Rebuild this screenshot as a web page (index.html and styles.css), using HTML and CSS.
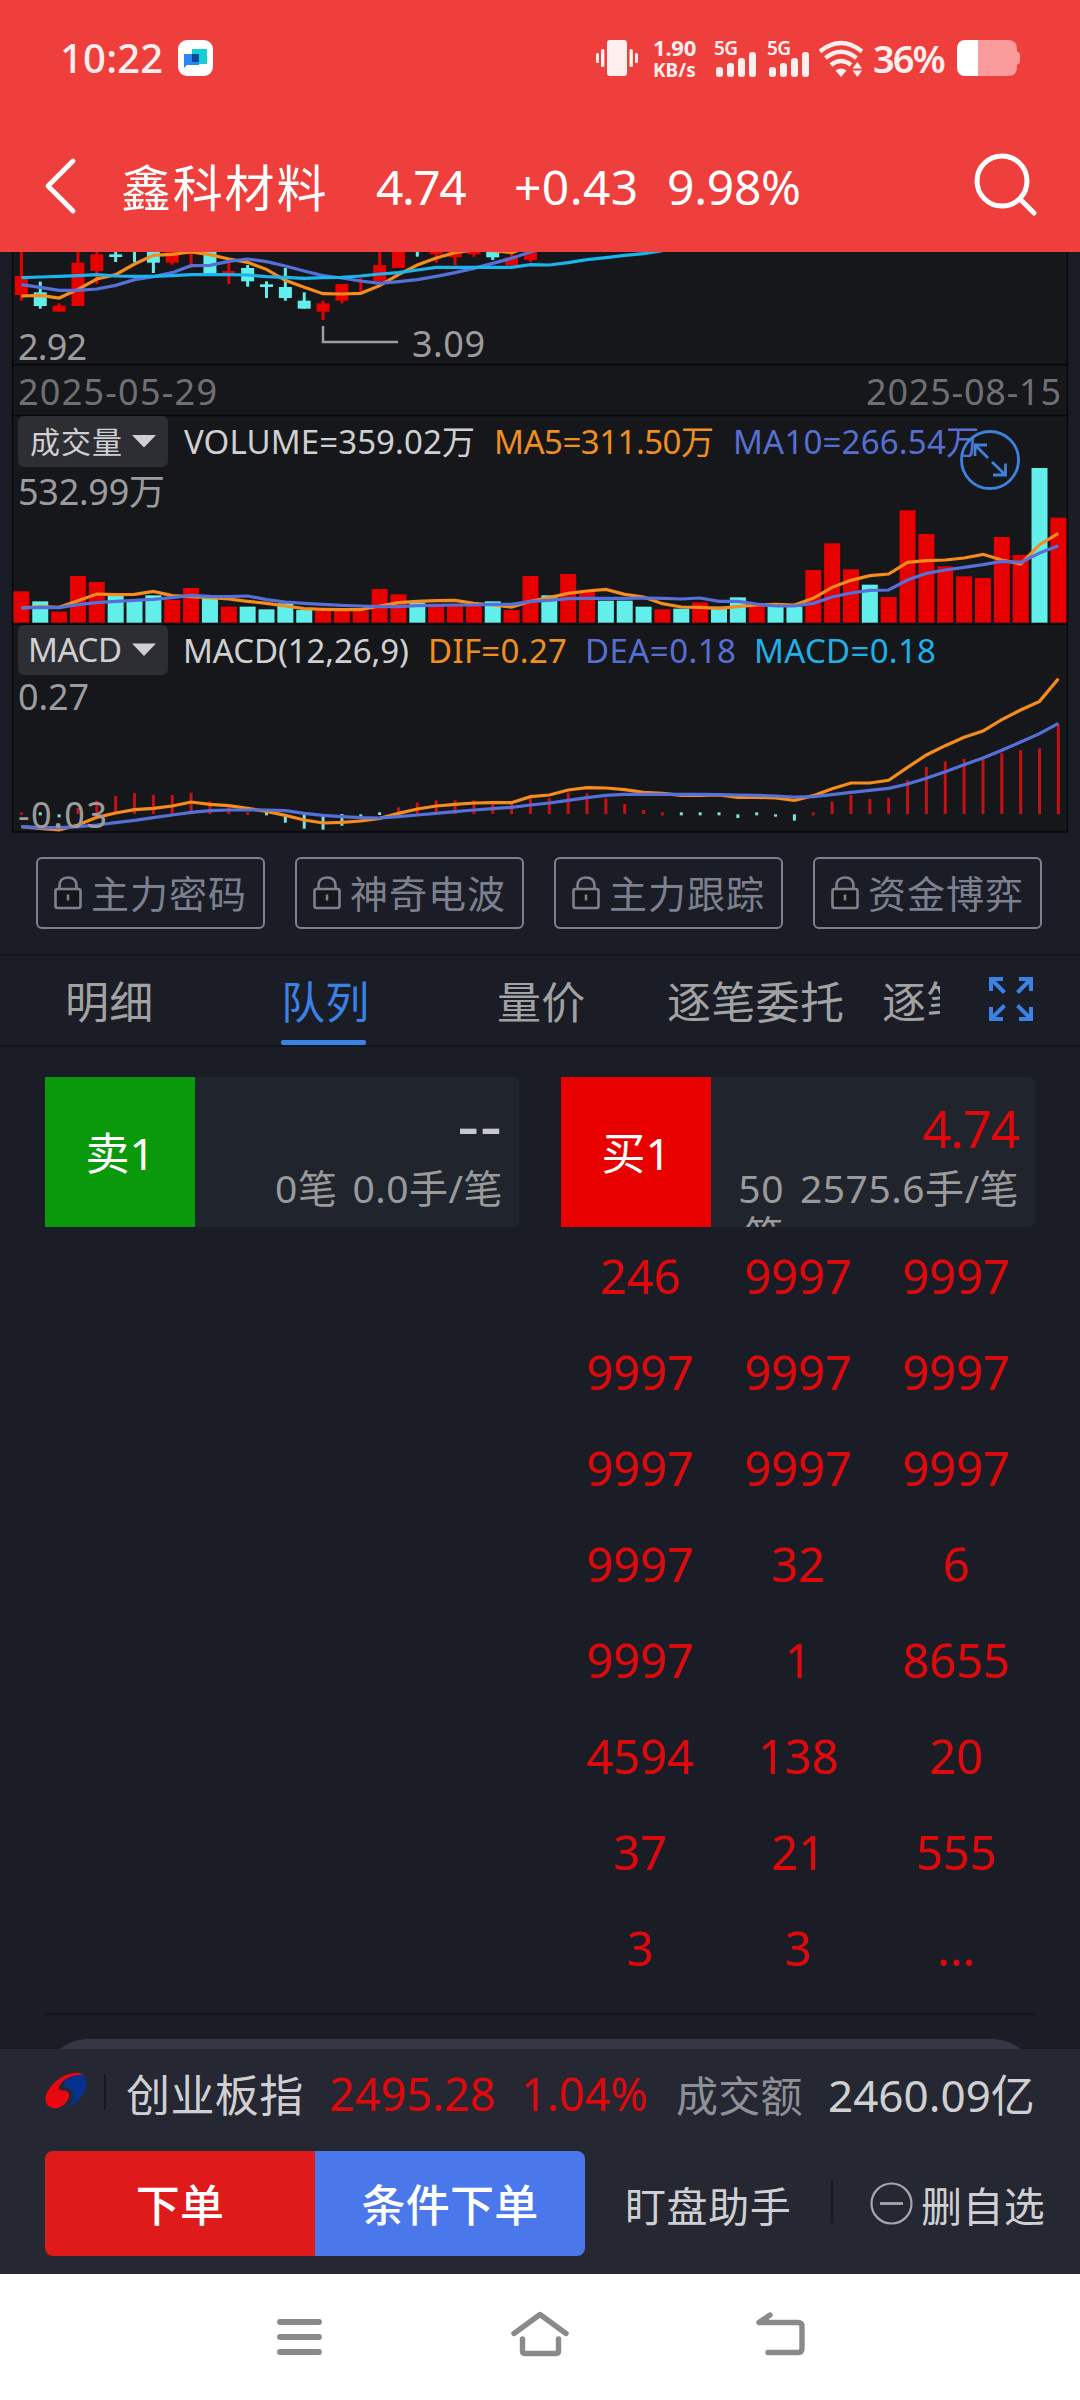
FILE: index.html
```html
<!DOCTYPE html>
<html lang="zh-CN">
<head>
<meta charset="utf-8">
<title>鑫科材料</title>
<link rel="stylesheet" href="styles.css">
</head>
<body>
<div class="screen">
  <header class="top">
    <div class="status">
      <span class="clock">10:22</span>
      <svg class="app-icon" width="36" height="36" viewBox="0 0 36 36"><rect width="35" height="36" rx="9" fill="#fff"/><path d="M14 9h15v15h-15z" fill="#13cfd3"/><path d="M6 14h15v11h-12l-3 3z" fill="#2b86f5"/><path d="M14 14h7v8h-7z" fill="#07489c"/></svg>
      <svg class="sys-icon vib" width="43" height="38" viewBox="0 0 43 38" fill="#ffefee"><rect x="11" y="1" width="20" height="36" rx="3"/><rect x="5" y="10" width="3.4" height="18" rx="1.5"/><rect x="0" y="14" width="3" height="10" rx="1.5"/><rect x="33.5" y="10" width="3.4" height="18" rx="1.5"/><rect x="39" y="14" width="3" height="10" rx="1.5"/></svg>
      <div class="speed"><span class="rate">1.90</span><span class="unit">KB/s</span></div>
      <div class="cell"><span class="gen">5G</span><svg width="42" height="38" viewBox="0 0 42 38" fill="#ffefee"><rect x="2" y="28" width="7" height="10" rx="3"/><rect x="13" y="24" width="7" height="14" rx="3"/><rect x="24" y="19" width="7" height="19" rx="3"/><rect x="35" y="13" width="7" height="25" rx="3"/></svg></div>
      <div class="cell"><span class="gen">5G</span><svg width="42" height="38" viewBox="0 0 42 38" fill="#ffefee"><rect x="2" y="28" width="7" height="10" rx="3"/><rect x="13" y="24" width="7" height="14" rx="3"/><rect x="24" y="19" width="7" height="19" rx="3"/><rect x="35" y="13" width="7" height="25" rx="3"/></svg></div>
      <svg class="sys-icon wifi" width="46" height="38" viewBox="0 0 46 38" fill="none" stroke="#ffefee" stroke-width="4.4"><path d="M1 12.5Q22 -4.500 43 12.500"/><path d="M6.500 19Q22 6.500 37.500 19"/><path d="M12 26Q22 18 32 26"/><path d="M16.500 31.500Q22 27.500 27.500 31.500L22 38z" fill="#ffefee" stroke="none"/><path d="M33.500 29.500l4.800-6.500 4.800 6.500zM33.500 31.500l4.800 6.500 4.800-6.500z" fill="#ffefee" stroke="none"/></svg>
      <span class="pct">36%</span>
      <svg class="battery" width="64" height="36" viewBox="0 0 64 36"><path d="M9 0H51Q60 0 60 9V11.500Q63 12 63 15V21Q63 24 60 24.500V27Q60 36 51 36H9Q0 36 0 27V9Q0 0 9 0z" fill="#f99c9b"/><path d="M9 0H21V36H9Q0 36 0 27V9Q0 0 9 0z" fill="#fff"/></svg>
    </div>
    <div class="title">
      <svg class="back" width="34" height="58" viewBox="0 0 34 58" fill="none" stroke="#fff" stroke-width="4.800" stroke-linecap="round" stroke-linejoin="round"><path d="M30 4L5 29 30 54"/></svg>
      <span class="name">鑫科材料</span>
      <span class="t-price">4.74</span>
      <span class="t-diff">+0.43</span>
      <span class="t-pct">9.98%</span>
      <svg class="search" width="64" height="64" viewBox="0 0 64 64" fill="none" stroke="#fff" stroke-width="5" stroke-linecap="round"><circle cx="28" cy="28" r="25"/><path d="M46 46L60 60"/></svg>
    </div>
  </header>

  <svg class="chart" id="chart" width="1080" height="588" viewBox="0 252 1080 588">
    <rect x="12.500" y="240" width="1055" height="592" fill="#16171b" stroke="#08090c" stroke-width="1.500"/>
    <path d="M12 364.600H1067M12 415.500H1067M12 624.300H1067" stroke="#060709" stroke-width="1.500"/>
    <g id="candles"></g>
    <path d="M323 326V342H398" fill="none" stroke="#9c9c9e" stroke-width="2.500"/>
    <g id="volume"></g>
    <g id="macd"></g>
    <g class="axis">
      <text x="18" y="360" textLength="69">2.92</text>
      <text x="412" y="357" textLength="73">3.09</text>
      <text class="dim" x="18" y="405" textLength="199">2025-05-29</text>
      <text class="dim" x="866" y="405" textLength="195">2025-08-15</text>
      <text x="18" y="505" textLength="147">532.99万</text>
      <text x="18" y="710" textLength="71">0.27</text>
      <text x="18" y="828" textLength="89">-0.03</text>
    </g>
    <g class="chips">
      <rect x="18" y="416" width="150" height="51" rx="6"/>
      <rect x="18" y="625" width="150" height="50" rx="6"/>
      <path d="M132 435h24l-12 12.500zM132 643.500h24l-12 12.500z" fill="#d0d0d2"/>
    </g>
    <g class="legend">
      <text x="30" y="453" textLength="92">成交量</text>
      <text x="184" y="454" textLength="291">VOLUME=359.02万</text>
      <text class="o" x="494" y="454" textLength="220">MA5=311.50万</text>
      <text class="b" x="733" y="454" textLength="246">MA10=266.54万</text>
      <text x="28" y="662" textLength="94">MACD</text>
      <text x="183" y="663" textLength="226">MACD(12,26,9)</text>
      <text class="o" x="428" y="663" textLength="139">DIF=0.27</text>
      <text class="b" x="585" y="663" textLength="151">DEA=0.18</text>
      <text class="c" x="754" y="663" textLength="182">MACD=0.18</text>
    </g>
    <g fill="none" stroke="#3f82dd" stroke-width="2.800"><circle cx="990" cy="460" r="28.500"/><path d="M988 458L975 445M975 456V445H987M992 462L1005.500 475M1005.500 463.500V475H993"/></g>
  </svg>

  <div class="locks">
    <div class="lock"><svg width="28" height="34" viewBox="0 0 28 34" fill="none" stroke="#7d808e" stroke-width="2.600"><path d="M5.500 13V10Q5.500 1.500 14 1.500T22.500 10V13"/><rect x="1.500" y="13" width="25" height="19" rx="2" fill="#15161a"/><path d="M14 18.500V24.500"/></svg><span>主力密码</span></div>
    <div class="lock"><svg width="28" height="34" viewBox="0 0 28 34" fill="none" stroke="#7d808e" stroke-width="2.600"><path d="M5.500 13V10Q5.500 1.500 14 1.500T22.500 10V13"/><rect x="1.500" y="13" width="25" height="19" rx="2" fill="#15161a"/><path d="M14 18.500V24.500"/></svg><span>神奇电波</span></div>
    <div class="lock"><svg width="28" height="34" viewBox="0 0 28 34" fill="none" stroke="#7d808e" stroke-width="2.600"><path d="M5.500 13V10Q5.500 1.500 14 1.500T22.500 10V13"/><rect x="1.500" y="13" width="25" height="19" rx="2" fill="#15161a"/><path d="M14 18.500V24.500"/></svg><span>主力跟踪</span></div>
    <div class="lock"><svg width="28" height="34" viewBox="0 0 28 34" fill="none" stroke="#7d808e" stroke-width="2.600"><path d="M5.500 13V10Q5.500 1.500 14 1.500T22.500 10V13"/><rect x="1.500" y="13" width="25" height="19" rx="2" fill="#15161a"/><path d="M14 18.500V24.500"/></svg><span>资金博弈</span></div>
  </div>

  <nav class="tabs">
    <div class="tab-list">
      <span class="tab">明细</span>
      <span class="tab active">队列</span>
      <span class="tab">量价</span>
      <span class="tab wide">逐笔委托</span>
      <span class="tab last">逐笔</span>
    </div>
    <svg class="expand" width="44" height="44" viewBox="0 0 44 44" fill="none" stroke="#3b82e6" stroke-width="4"><path d="M2 14V2H14M2 2L15.500 15.500M30 2H42V14M42 2L28.500 15.500M2 30V42H14M2 42L15.500 28.500M42 30V42H30M42 42L28.500 28.500"/></svg>
  </nav>

  <main class="queue">
    <section class="side">
      <div class="card">
        <div class="badge sell">卖1</div>
        <div class="info"><div class="px flat">--</div><div class="stat"><span class="cnt0">0笔</span><span>0.0手/笔</span></div></div>
      </div>
    </section>
    <section class="side">
      <div class="card">
        <div class="badge buy">买1</div>
        <div class="info"><div class="px">4.74</div><div class="stat"><span class="cnt">50笔</span><span class="avg">2575.6手/笔</span></div></div>
      </div>
      <div class="orders">
        <span>246</span><span>9997</span><span>9997</span>
        <span>9997</span><span>9997</span><span>9997</span>
        <span>9997</span><span>9997</span><span>9997</span>
        <span>9997</span><span>32</span><span>6</span>
        <span>9997</span><span>1</span><span>8655</span>
        <span>4594</span><span>138</span><span>20</span>
        <span>37</span><span>21</span><span>555</span>
        <span>3</span><span>3</span><span>...</span>
      </div>
    </section>
  </main>
  <div class="peek"><div class="sheet"></div></div>

  <footer class="dock">
    <div class="index">
      <svg class="logo" width="42" height="42" viewBox="0 0 42 42"><path d="M23 37C40 30 45 12 38 5C30 3 20 7 19 14C18 19 27 17 28 23C29 28 27 32 23 37z" fill="#06318f"/><path d="M38 5C34 0 18 3 8 14C-1 24 -2 33 5 37C13 41 23 34 24 26C25 18 15 22 14 19C13 13 24 4 38 5z" fill="#e90712"/></svg>
      <i class="bar"></i>
      <span class="i-name">创业板指</span>
      <span class="i-val">2495.28</span>
      <span class="i-pct">1.04%</span>
      <span class="i-lab">成交额</span>
      <span class="i-amt">2460.09亿</span>
    </div>
    <div class="actions">
      <div class="btn order">下单</div>
      <div class="btn cond">条件下单</div>
      <span class="helper">盯盘助手</span>
      <i class="bar tall"></i>
      <svg class="minus" width="43" height="43" viewBox="0 0 43 43" fill="none" stroke="#a7a7ab" stroke-width="2.200"><circle cx="21.500" cy="21.500" r="20"/><path d="M10 21.500H33" stroke-width="2.800"/></svg>
      <span class="remove">删自选</span>
    </div>
  </footer>

  <div class="sysnav">
    <svg width="48" height="44" viewBox="0 0 48 44" fill="none" stroke="#8a8a8a" stroke-width="5.800" stroke-linecap="round"><path d="M4 8H43M4 23H43M4 38H43"/></svg>
    <svg width="60" height="48" viewBox="0 0 60 48" fill="none" stroke="#8a8a8a" stroke-width="5.400" stroke-linecap="round" stroke-linejoin="round"><path d="M4 23.500L30 4.500 56 23.500M12.500 29V41Q12.500 43.500 15 43.500H46Q48.500 43.500 48.500 41V29"/></svg>
    <svg width="52" height="48" viewBox="0 0 52 48" fill="none" stroke="#8a8a8a" stroke-width="5.400" stroke-linecap="round" stroke-linejoin="round"><path d="M16 4L5 11.500H44Q48 11.500 48 15.500V37.500Q48 41.500 44 41.500H14"/><path d="M5 11.500L14 5V11.500z" fill="#8a8a8a" stroke-width="2"/></svg>
  </div>
</div>
<script src="script.js"></script>
</body>
</html>
```
FILE: styles.css
```css
* { box-sizing: border-box; }
body {
  margin: 0;
  font-family: "Noto Sans", "Noto Sans CJK SC", sans-serif;
}
.screen {
  width: 1080px;
  height: 2400px;
  overflow: hidden;
  display: flex;
  flex-direction: column;
  background: #1a1d26;
  white-space: nowrap;
}
svg { display: block; flex: none; }
span { flex: none; }

/* status bar and title */
.top { flex: none; height: 252px; background: #ef3f3c; color: #fff; }
.status { display: flex; align-items: center; height: 116px; padding-left: 60px; }
.clock { width: 118px; font-size: 40px; font-weight: 500; letter-spacing: .2px; margin-top: -2px; color: #ffefee; }
.vib { margin-left: 382px; }
.speed { display: flex; flex-direction: column; width: 75px; padding-left: 14px; font-weight: 700; color: #ffefee; }
.rate { font-size: 22px; line-height: 23px; letter-spacing: -.2px; }
.unit { font-size: 19px; line-height: 22px; }
.cell { display: grid; width: 53px; color: #ffefee; }
.cell > * { grid-area: 1 / 1; }
.gen { font-size: 19px; font-weight: 600; line-height: 18px; letter-spacing: -.6px; }
.wifi { margin-left: -1px; }
.pct { width: 84px; margin-left: 8px; font-size: 38px; font-weight: 600; letter-spacing: -2px; color: #ffefee; margin-top: -1px; }
.title { display: flex; align-items: center; height: 130px; margin-top: 5px; padding-left: 43px; font-size: 48px; }
.back { width: 34px; }
.name { width: 255px; margin-left: 44px; margin-top: -2px; font-size: 50px; letter-spacing: 1.800px; }
.t-price { width: 138px; letter-spacing: -1.500px; }
.t-diff { width: 153px; letter-spacing: .4px; }
.t-pct { width: 305px; letter-spacing: -.3px; }
.search { margin-top: -2px; margin-left: 2px; }

/* charts */
.chart .axis text { font-size: 36px; fill: #9c9c9e; }
.chart .axis .dim { fill: #6f7074; }
.chart .legend text { font-size: 33px; fill: #d0d0d2; }
.chart .legend text:first-child { font-size: 30px; }
.chart .legend .o { fill: #f08f20; }
.chart .legend .b { fill: #566fd0; }
.chart .legend .c { fill: #1fb0e6; }
.chips rect { fill: #2d2e33; }
.line { fill: none; stroke-width: 3.200; }
.line.o { stroke: #f58c1c; }
.line.b { stroke: #5570d8; }
.line.c { stroke: #1bb4ee; }

/* locked indicators */
.locks { flex: none; display: flex; gap: 30px; height: 114px; padding: 17px 36px 0; }
.lock {
  display: flex; align-items: center; gap: 9px;
  width: 229px; height: 72px; padding-left: 16px;
  border: 2px solid #7d808e; border-radius: 6px;
  font-size: 38px; letter-spacing: 1px; color: #7d808e;
}
.lock span { line-height: 68px; }

/* tabs */
.tabs {
  flex: none; display: flex; align-items: center;
  height: 93px; border-top: 2px solid #14161c; border-bottom: 2px solid #14161c;
}
.tab-list {
  display: flex; width: 940px; height: 89px; overflow: hidden;
  padding-left: 65px; font-size: 44px; letter-spacing: .3px; color: #a2a2a3;
}
.tab { width: 216px; line-height: 92px; }
.tab:nth-child(3) { width: 170px; }
.tab.wide { width: 215px; }
.tab.active { color: #3b82e6; }
.tab.active::after {
  content: ""; display: block; width: 85px; height: 5px;
  margin-top: -8px; border-radius: 2px; background: #3b82e6;
}
.expand { margin-left: 49px; margin-top: -3px; }

/* order queue */
.queue { flex: none; display: flex; gap: 42px; height: 968px; margin: 0 45px; padding-top: 30px; border-bottom: 2px solid #14161b; }
.side { width: 474px; }
.card { display: flex; height: 150px; background: #20242d; border-radius: 0 6px 6px 0; overflow: hidden; }
.badge { flex: none; width: 150px; line-height: 152px; text-align: center; font-size: 44px; color: #fff; }
.sell { background: #0a990b; }
.buy { background: #e90000; }
.info { flex: 1; padding: 19px 16px 0 0; }
.px { height: 64px; line-height: 64px; text-align: right; font-size: 51px; letter-spacing: -1.200px; color: #df080b; }
.px.flat { line-height: 56px; font-size: 68px; color: #c8c8cc; letter-spacing: 1px; }
.stat { display: flex; justify-content: flex-end; margin-top: 5px; font-size: 39px; letter-spacing: .5px; line-height: 46px; color: #9a9a9b; }
.cnt0 { margin-right: 15px; }
.cnt { width: 56px; margin-right: 16px; white-space: normal; word-break: break-all; text-align: right; }
.orders { display: grid; grid-template-columns: repeat(3, 158px); grid-auto-rows: 96px; text-align: center; font-size: 47px; line-height: 98px; color: #df080b; }

/* sheet edge behind the dock */
.peek { flex: none; height: 34px; padding: 24px 45px 0; overflow: hidden; }
.sheet { height: 100px; background: #353744; border-radius: 42px; }

/* dock */
.dock { flex: none; height: 225px; background: #252733; }
.index { display: flex; align-items: center; height: 88px; padding-left: 45px; font-size: 45px; }
.logo { margin-top: -4px; }
.bar { flex: none; width: 2px; height: 36px; margin-left: 17px; margin-top: -3px; background: #15171d; }
.i-name { width: 203px; margin-left: 20px; font-size: 44px; letter-spacing: .4px; color: #d0d0d2; }
.i-val { width: 192px; color: #df080b; }
.i-pct { width: 155px; color: #df080b; }
.i-lab { width: 152px; font-size: 42px; letter-spacing: .2px; color: #8f9096; }
.i-amt { color: #d0d0d2; font-size: 44px; }
.actions { display: flex; align-items: center; padding: 14px 0 0 45px; color: #d0d0d2; font-size: 41px; }
.btn { width: 270px; height: 105px; line-height: 108px; text-align: center; font-size: 44px; font-weight: 500; letter-spacing: .3px; color: #fff; }
.order { background: #de1a1a; border-radius: 8px 0 0 8px; }
.cond { background: #4a77e9; border-radius: 0 8px 8px 0; }
.helper { width: 189px; margin-left: 40px; letter-spacing: .6px; }
.bar.tall { height: 42px; }
.minus { margin-left: 37px; }
.remove { margin-left: 8px; letter-spacing: .4px; }

/* system navigation */
.sysnav { flex: 1; display: flex; align-items: flex-start; padding: 40px 0 0 276px; background: #fff; }
.sysnav svg:nth-child(2) { margin: -4px 0 0 186px; }
.sysnav svg:nth-child(3) { margin: -3px 0 0 184px; }
```
FILE: script.js
```js
const X0 = 21.4, STEP = 18.854, RED = "#e60000", CYAN = "#62efec";
const cx = i => X0 + i * STEP;
const el = id => document.getElementById(id);
const rect = (x, y, w, h, c) => `<rect x="${x}" y="${y}" width="${w}" height="${h}" fill="${c}"/>`;
const line = (vals, y0, cls) =>
  `<polyline class="line ${cls}" points="${vals.map((v, i) => cx(i) + "," + (y0 + v / 3)).join(" ")}"/>`;

// body top, body bottom, wick top, wick bottom, falling day
const candles = [
  [108,165,30,182,0],[157,198,125,206,1],[197,215,190,215,0],[68,198,30,198,0],[43,93,30,132,0],
  [43,51,30,66,1],[30,33,30,66,1],[30,68,30,99,1],[30,68,30,74,0],[36,42,30,83,0],[30,102,30,102,1],
  [93,100,60,132,0],[84,124,75,140,1],[133,141,124,174,1],[141,174,84,182,1],[182,206,157,206,1],
  [190,215,182,240,0],[132,182,132,190,0],[120,126,114,155,0],[75,124,30,124,0],[30,84,30,84,0],
  [30,34,30,50,1],[36,43,30,68,0],[36,52,30,75,0],[36,43,30,50,0],[36,52,30,60,1],[52,76,40,76,0],[30,60,30,66,0]];
el("candles").innerHTML = candles.map(([a, b, c, d, f], i) => {
  const col = f ? CYAN : RED;
  return rect(cx(i) - 1.5, 240 + c / 3, 3, (d - c) / 3, col) + rect(cx(i) - 6.5, 240 + a / 3, 13, (b - a) / 3, col);
}).join("")
  + line([168,166,174,148,117,104,72,46,43,36,44,57,67,88,121,142,161,162,160,137,104,75,54,38,30,32,38,20], 240, "o")
  + line([134,142,151,151,147,136,119,110,98,77,76,64,57,65,78,93,107,114,123,130,125,119,109,98,85,70,55,36,20], 240, "b")
  + line([113,111,109,107,104,108,109,109,107,104,104,104,105,110,112,115,113,112,108,102,98,90,82,82,82,82,82,74,75,68,59,53,46,41,32], 240, "c");

const vol = [544,574,605,498,516,556,572,556,570,534,566,590,590,598,580,600,602,602,602,537,553,578,588,588,588,574,600,498,
  556,492,545,572,572,590,598,596,577,590,562,588,590,590,480,400,478,524,561,301,372,469,499,504,381,435,174,323];
const down = new Set([1,5,6,7,10,12,13,14,15,21,25,28,31,32,33,35,37,38,40,41,45,54]);
el("volume").innerHTML = vol.map((v, i) =>
  rect(cx(i) - 8, 410 + v / 3, 16, (638 - v) / 3, down.has(i) ? CYAN : RED)).join("")
  + line([594,590,592,572,552,554,553,544,557,560,563,567,574,580,588,596,598,599,599,588,578,574,572,571,580,585,591,574,
    563,550,543,538,553,561,581,591,592,595,590,585,583,585,565,532,511,497,492,457,452,450,444,433,450,462,404,370], 410, "o")
  + line([594,592,593,584,578,574,571,568,563,556,559,560,558,569,576,580,583,586,588,590,590,587,586,585,585,583,583,574,
    571,566,565,565,565,564,565,567,564,574,574,582,588,588,580,561,549,541,540,510,490,480,472,464,454,457,429,407], 410, "b");

// histogram bars grow from the zero line Z
const Z = 582;
const hist = [[577,585],[577,586,1],[583,592,1],[564,Z],[542,Z],[528,Z],[519,Z],[525,Z],[525,Z],[518,Z],[544,Z],[562,Z],[577,585],
  [577,586,1],[588,608,1],[582,626,1],[588,629,1],[582,617,1],[583,598,1],[577,585,1],[562,Z],[547,Z],[541,Z],[541,Z],[541,Z],
  [547,Z],[552,Z],[535,Z],[534,Z],[518,Z],[520,Z],[535,Z],[552,Z],[570,Z],[577,586],[577,586,1],[577,586,1],[577,586,1],
  [583,594,1],[577,586,1],[583,590,1],[583,602,1],[577,586],[544,Z],[525,Z],[537,Z],[534,Z],[480,Z],[441,Z],[424,Z],[417,Z],
  [418,Z],[399,Z],[390,Z],[385,Z],[313,Z]];
el("macd").innerHTML = hist.map(([a, b, f], i) =>
  rect(cx(i) - 1.5, 620 + a / 3, 3, (b - a) / 3, f ? "#7fe0de" : "#c31114")).join("")
  + line([620,625,630,615,592,579,569,565,558,546,553,557,565,574,586,600,609,607,603,595,580,567,558,553,549,548,548,530,
    525,510,503,504,509,517,520,526,526,525,532,532,534,541,527,506,489,489,481,442,405,377,352,333,299,270,244,176], 620, "o")
  + line([620,623,623,620,615,608,601,593,585,577,572,570,570,570,572,580,586,590,593,594,590,585,580,575,570,566,562,555,
    549,541,533,526,523,523,523,523,523,524,525,526,528,531,530,524,517,511,505,492,475,455,434,414,391,366,341,310], 620, "b");
```
